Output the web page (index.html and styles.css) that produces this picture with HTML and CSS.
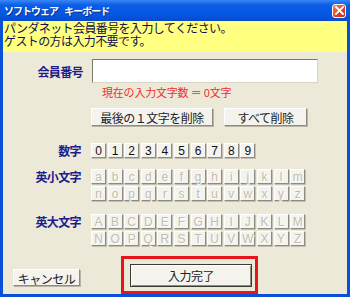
FILE: index.html
```html
<!DOCTYPE html>
<html lang="ja">
<head>
    <meta charset="UTF-8">
    <meta name="viewport" content="width=device-width, initial-scale=1.0">
    <title>ソフトウェア キーボード</title>
    <link rel="stylesheet" href="styles.css">
</head>
<body>

<div class="window">
    <div class="titlebar">
        <span class="title">ソフトウェア キーボード</span>
        <button class="close" aria-label="閉じる">
            <svg width="9" height="9" viewBox="0 0 9 9">
                <path d="M1 1 L8 8 M8 1 L1 8" stroke="#fff" stroke-width="1.8" stroke-linecap="square"/>
            </svg>
        </button>
    </div>

    <div class="dialog">
        <div class="notice">
            <div>パンダネット会員番号を入力してください。</div>
            <div>ゲストの方は入力不要です。</div>
        </div>

        <div class="row member">
            <span class="label">会員番号</span>
            <input class="field" type="text">
        </div>
        <p class="count">現在の入力文字数&nbsp;＝&nbsp;0文字</p>

        <div class="row actions">
            <button class="btn wide">最後の１文字を削除</button>
            <button class="btn">すべて削除</button>
        </div>

        <div class="row keys digits">
            <span class="label">数字</span>
            <div class="keyrows" id="digitKeys"></div>
        </div>

        <div class="row keys lower">
            <span class="label">英小文字</span>
            <div class="keyrows" id="lowerKeys"></div>
        </div>

        <div class="row keys upper">
            <span class="label">英大文字</span>
            <div class="keyrows" id="upperKeys"></div>
        </div>

        <div class="row footer">
            <button class="btn cancel">キャンセル</button>
            <div class="highlight">
                <button class="btn done">入力完了</button>
            </div>
        </div>
    </div>
</div>

<script>
    function makeRow(chars, disabled) {
        let row = document.createElement("div");
        row.className = "keyrow";
        for (let c of chars) {
            let key = document.createElement("button");
            key.className = "key" + (disabled ? " off" : "");
            key.innerText = c;
            row.appendChild(key);
        }
        return row;
    }

    document.getElementById("digitKeys").appendChild(makeRow("0123456789", false));
    document.getElementById("lowerKeys").appendChild(makeRow("abcdefghijklm", true));
    document.getElementById("lowerKeys").appendChild(makeRow("nopqrstuvwxyz", true));
    document.getElementById("upperKeys").appendChild(makeRow("ABCDEFGHIJKLM", true));
    document.getElementById("upperKeys").appendChild(makeRow("NOPQRSTUVWXYZ", true));
</script>

</body>
</html>
```

FILE: styles.css
```css
body {
    margin: 0;
    font-family: "Noto Sans CJK JP", sans-serif;
}
.window {
    width: 350px;
    height: 297px;
    display: flex;
    flex-direction: column;
    background: #0a4fd8;
}
.titlebar {
    height: 21px;
    display: flex;
    align-items: center;
    justify-content: space-between;
    padding: 0 4px 0 4px;
    background: linear-gradient(#3a86f5, #0a5de6 25%, #0455e0 75%, #0a49c8);
}
.title {
    color: #fff;
    font-size: 10px;
    font-weight: bold;
    letter-spacing: -1px;
    word-spacing: 5px;
    text-shadow: 1px 1px 0 #0a2e8c;
}
.close {
    width: 14px;
    height: 14px;
    padding: 0;
    display: flex;
    align-items: center;
    justify-content: center;
    border: 1px solid #fff;
    border-radius: 3px;
    background: linear-gradient(135deg, #f08a68, #d9401e 60%, #c0341a);
}
.dialog {
    flex: 1;
    margin: 0 3px 3px;
    background: #ece9d8;
}
.notice {
    height: 31px;
    padding-left: 1px;
    background: #ffff80;
    color: #10104a;
    font-size: 12px;
    line-height: 13px;
    letter-spacing: -0.6px;
}
.notice div {
    height: 13px;
}
.row {
    display: flex;
    align-items: center;
    gap: 8px;
}
.label {
    width: 80px;
    flex: none;
    text-align: right;
    color: #1c1c8c;
    font-size: 12px;
    font-weight: bold;
    letter-spacing: -0.6px;
}
.member {
    margin-top: 7px;
}
.field {
    width: 226px;
    height: 24px;
    margin: 0 0 0 1px;
    box-sizing: border-box;
    border: 1px solid;
    border-color: #7a786c #d8d5c6 #d8d5c6 #7a786c;
    background: #fff;
}
.count {
    margin: 3px 0 0 99px;
    color: #ee3030;
    font-size: 11px;
    line-height: 13px;
    letter-spacing: -0.2px;
}
.btn {
    height: 18px;
    padding: 0;
    box-sizing: border-box;
    border: 1px solid;
    border-color: #fff #8e8c80 #8e8c80 #fff;
    box-shadow: 1px 1px 0 #b8b5a6;
    background: #f4f3ee;
    color: #222;
    font-family: "Noto Sans CJK JP", sans-serif;
    font-size: 12px;
    letter-spacing: -0.5px;
}
.actions {
    margin: 9px 0 0 88px;
    gap: 11px;
}
.actions .btn {
    width: 83px;
}
.actions .btn.wide {
    width: 122px;
}
.keys {
    align-items: flex-start;
}
.keys .label {
    padding-right: 2px;
    box-sizing: border-box;
    line-height: 15px;
}
.digits {
    margin-top: 17px;
}
.lower {
    margin-top: 11px;
}
.upper {
    margin-top: 13px;
}
.keyrows {
    display: flex;
    flex-direction: column;
    gap: 2px;
}
.keyrow {
    display: flex;
    gap: 1.6px;
}
.key {
    width: 15px;
    height: 15px;
    padding: 0;
    box-sizing: border-box;
    border: 1px solid;
    border-color: #fff #8e8c80 #8e8c80 #fff;
    box-shadow: 1px 1px 0 #c4c1b2;
    background: #f4f3ee;
    color: #111;
    font-family: "Liberation Sans", sans-serif;
    font-size: 12px;
    line-height: 12px;
}
.key.off {
    color: #c0bdb0;
    text-shadow: 1px 1px 0 #fff;
}
.footer {
    margin: 10px 0 0 10px;
    gap: 41px;
}
.cancel {
    width: 67px;
    height: 17px;
    margin-top: 4px;
}
.highlight {
    padding: 3px 3px 4px 6px;
    border: 3px solid #e8141c;
}
.done {
    width: 122px;
    height: 23px;
    border: 1px solid #3a3a34;
    box-shadow: inset 1px 1px 0 #fff, inset -1px -1px 0 #8e8c80;
}
```
